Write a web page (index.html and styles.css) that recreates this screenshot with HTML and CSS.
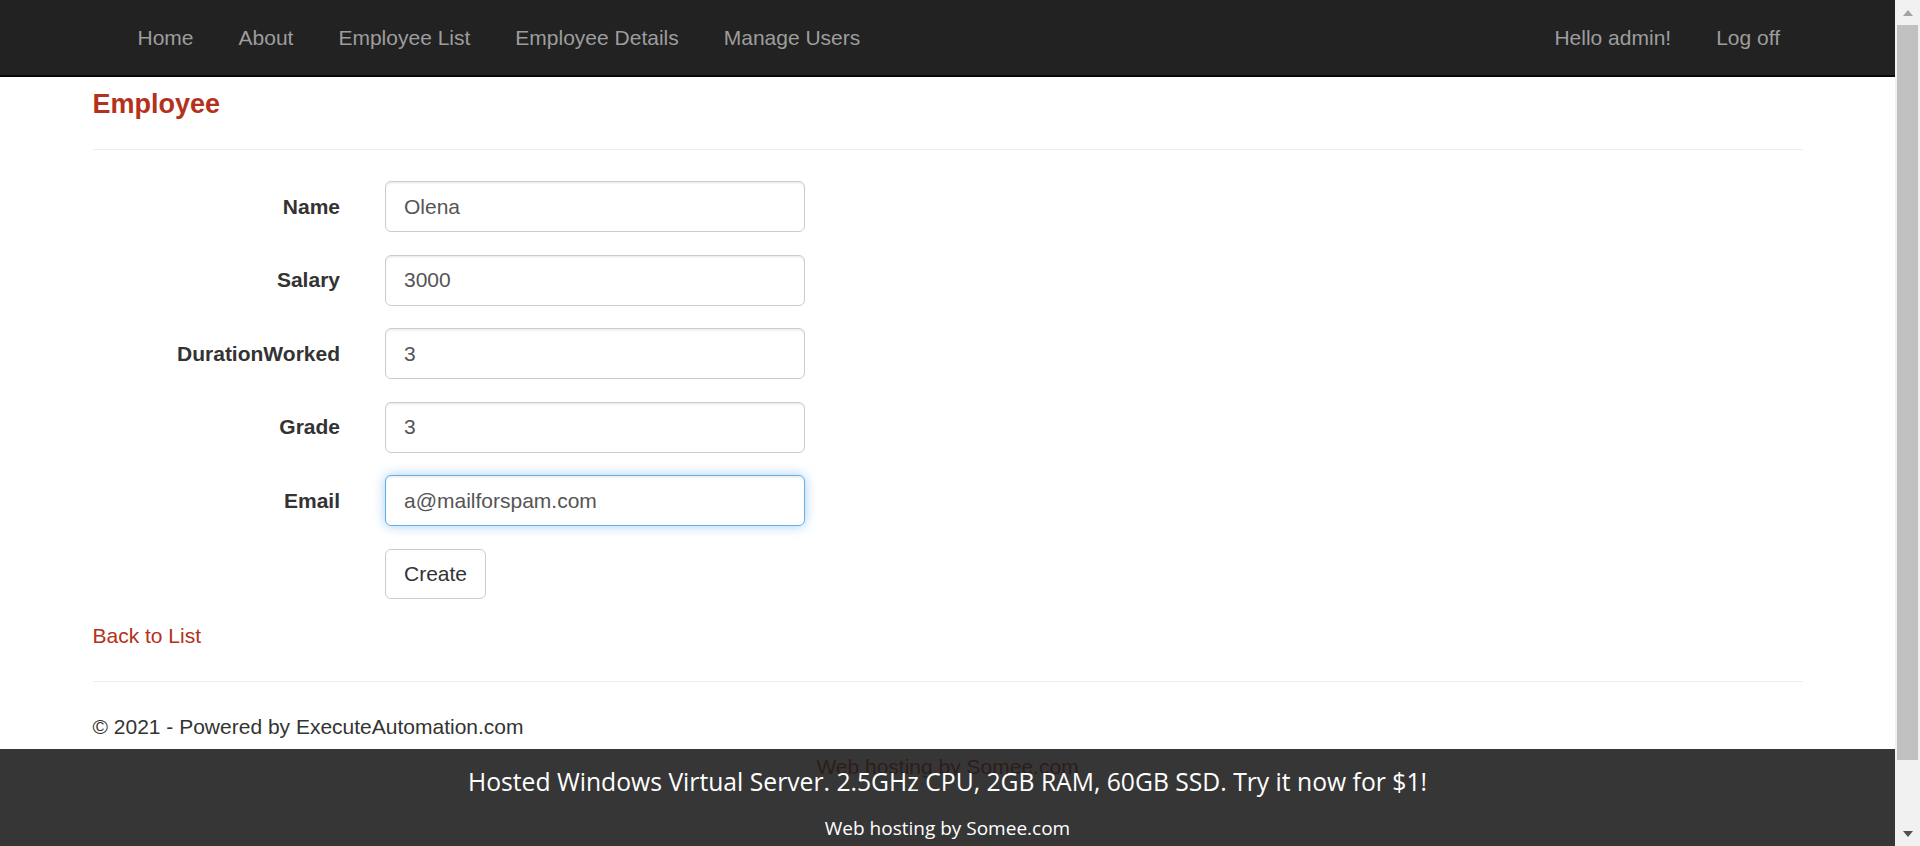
FILE: index.html
```html
<!DOCTYPE html>
<html>
<head>
<meta charset="utf-8">
<title>Create - Employee</title>
<link rel="stylesheet" href="styles.css">
</head>
<body>
<div class="viewport">
  <div class="page">
    <nav class="navbar">
      <div class="nav-inner">
        <ul class="nav">
          <li><a href="#">Home</a></li>
          <li><a href="#">About</a></li>
          <li><a href="#">Employee List</a></li>
          <li><a href="#">Employee Details</a></li>
          <li><a href="#">Manage Users</a></li>
        </ul>
        <ul class="nav">
          <li><a href="#">Hello admin!</a></li>
          <li><a href="#">Log off</a></li>
        </ul>
      </div>
    </nav>
    <div class="container body-content">
      <h4 class="title">Employee</h4>
      <hr class="rule rule-top">
      <form class="form-horizontal">
        <div class="form-group">
          <label class="control-label">Name</label>
          <div class="field"><input class="form-control" type="text" value="Olena"></div>
        </div>
        <div class="form-group">
          <label class="control-label">Salary</label>
          <div class="field"><input class="form-control" type="text" value="3000"></div>
        </div>
        <div class="form-group">
          <label class="control-label">DurationWorked</label>
          <div class="field"><input class="form-control" type="text" value="3"></div>
        </div>
        <div class="form-group">
          <label class="control-label">Grade</label>
          <div class="field"><input class="form-control" type="text" value="3"></div>
        </div>
        <div class="form-group">
          <label class="control-label">Email</label>
          <div class="field"><input class="form-control focused" type="text" value="a@mailforspam.com"></div>
        </div>
        <div class="form-group">
          <div class="control-label"></div>
          <div class="field"><button type="button" class="btn">Create</button></div>
        </div>
      </form>
      <div class="back"><a href="#">Back to List</a></div>
      <hr class="rule rule-bottom">
      <footer class="footer"><p>© 2021 - Powered by ExecuteAutomation.com</p></footer>
    </div>
    <div class="somee-link"><a href="#">Web hosting by Somee.com</a></div>
    <div class="ad-bar">
      <div class="ad-line1">Hosted Windows Virtual Server. 2.5GHz CPU, 2GB RAM, 60GB SSD. Try it now for $1!</div>
      <div class="ad-line2">Web hosting by Somee.com</div>
    </div>
  </div>
  <div class="scrollbar">
    <div class="sb-btn"><span class="arrow-up"></span></div>
    <div class="sb-track"><div class="sb-thumb"></div></div>
    <div class="sb-btn"><span class="arrow-down"></span></div>
  </div>
</div>
</body>
</html>
```
FILE: styles.css
```css
* { box-sizing: border-box; }
html, body { margin: 0; padding: 0; height: 100%; }
body {
  font-family: "Liberation Sans", Arial, Helvetica, sans-serif;
  font-size: 21px;
  line-height: 30px;
  color: #333;
  background: #fff;
  overflow: hidden;
}
a { text-decoration: none; }

.viewport { display: flex; width: 1920px; height: 846px; }
.page { position: relative; flex: 1; height: 846px; overflow: hidden; background: #fff; }

/* navbar */
.navbar {
  height: 77px;
  background: #222;
  border-bottom: 2px solid #080808;
}
.nav-inner {
  width: 1755px;
  margin: 0 auto;
  padding: 0 22.5px 0 45px;
  display: flex;
  justify-content: space-between;
}
.nav { list-style: none; margin: 0; padding: 0; display: flex; }
.nav a {
  display: block;
  padding: 22.5px 22.5px;
  line-height: 30px;
  color: #9d9d9d;
}

/* content */
.container { width: 1755px; margin: 0 auto; padding: 0 22.5px; }
.title {
  margin: 12px 0 15px;
  font-size: 27px;
  line-height: 30px;
  font-weight: 700;
  color: #b4311b;
}
.rule { border: 0; border-top: 1px solid #eee; height: 0; margin: 0; }
.rule-top { margin: 30px 0 31px; }
.rule-bottom { margin: 30px 0 30px; }

.form-group { display: flex; margin: 0 -22.5px 22.5px; }
.control-label {
  width: 292.5px;
  padding: 10.5px 22.5px 0;
  text-align: right;
  font-weight: 700;
  line-height: 30px;
  flex-shrink: 0;
}
.field { padding: 0 22.5px; }
.form-control {
  display: block;
  width: 420px;
  height: 51px;
  padding: 9px 18px;
  font-family: "Liberation Sans", Arial, Helvetica, sans-serif;
  font-size: 21px;
  line-height: 30px;
  color: #555;
  background: #fff;
  border: 1px solid #ccc;
  border-radius: 6px;
  box-shadow: inset 0 1.5px 1.5px rgba(0,0,0,.075);
  outline: none;
}
.form-control.focused {
  border-color: #66afe9;
  box-shadow: inset 0 1.5px 1.5px rgba(0,0,0,.075), 0 0 12px rgba(102,175,233,.6);
}
.btn {
  display: block;
  height: 50px;
  padding: 9px 18px;
  font-family: "Liberation Sans", Arial, Helvetica, sans-serif;
  font-size: 21px;
  line-height: 30px;
  color: #333;
  background: #fff;
  border: 1px solid #ccc;
  border-radius: 6px;
}
.back { margin-top: 2px; }
.back a { color: #b4311b; }
.footer p { margin: 0 0 10px; }

.somee-link { text-align: center; }
.somee-link a { color: #c89080; }

/* ad bar overlay */
.ad-bar {
  position: absolute;
  left: 0; right: 0; bottom: 0;
  height: 97px;
  background: rgba(0,0,0,.79);
  color: #fff;
  text-align: center;
  font-family: "Open Sans", "Noto Sans", sans-serif;
  padding-top: 16px;
}
.ad-line1 { font-size: 24.7px; line-height: 34px; }
.ad-line2 { font-size: 19px; line-height: 26px; margin-top: 16px; }

/* fake scrollbar */
.scrollbar {
  width: 25px;
  height: 846px;
  background: #f1f1f1;
  display: flex;
  flex-direction: column;
}
.sb-btn { height: 25px; display: flex; align-items: center; justify-content: center; }
.sb-track { flex: 1; padding: 0 2px; }
.sb-thumb { height: 735px; background: #c1c1c1; }
.arrow-up {
  width: 0; height: 0;
  border-left: 5.5px solid transparent;
  border-right: 5.5px solid transparent;
  border-bottom: 6px solid #a3a3a3;
}
.arrow-down {
  width: 0; height: 0;
  border-left: 5.5px solid transparent;
  border-right: 5.5px solid transparent;
  border-top: 6px solid #505050;
}
```
